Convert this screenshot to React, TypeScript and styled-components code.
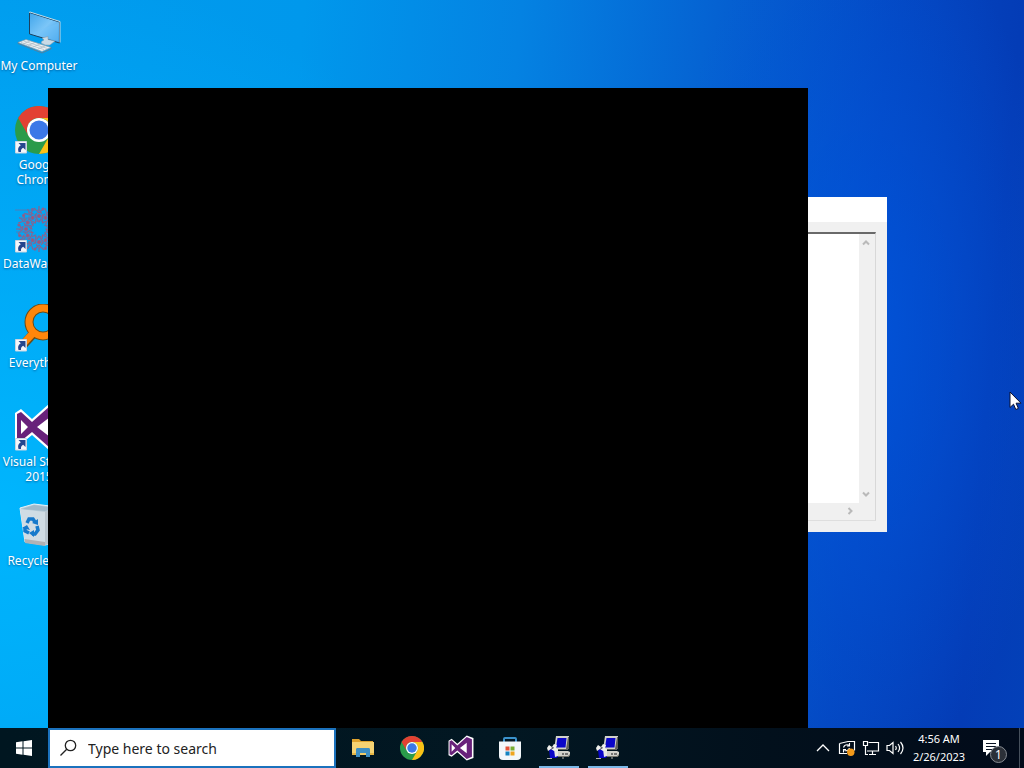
import React from "react";
import styled, { createGlobalStyle, css } from "styled-components";

const Global = createGlobalStyle`
  * { box-sizing: border-box; }
  html, body { margin: 0; padding: 0; }
  body { font-family: "Noto Sans", "Open Sans", sans-serif; overflow: hidden; }
  button { font: inherit; color: inherit; background: none; border: 0; padding: 0; }
  svg { display: block; flex: none; }
`;

const Screen = styled.div`
  display: grid;
  grid-template-rows: 1fr 40px;
  height: 100vh;
  overflow: hidden;
`;

const Desktop = styled.main`
  position: relative;
  min-height: 0;
  overflow: hidden;
  background:
    radial-gradient(ellipse 20% 60% at 84% 46%, rgba(0, 88, 226, 0.7), rgba(0, 88, 226, 0) 100%),
    radial-gradient(ellipse 55% 75% at 0% 70%, rgba(0, 184, 255, 0.9), rgba(0, 184, 255, 0) 100%),
    linear-gradient(95deg, #009cee 0%, #0098ec 28%, #0482e2 48%, #0562d2 66%, #0448c2 82%, #043cb6 94%, #0340b8 100%);
`;

const IconColumn = styled.nav`
  display: flex;
  flex-direction: column;
  width: 78px;
`;

const Shortcut = styled.button`
  display: flex;
  flex-direction: column;
  align-items: center;
  height: 99px;
  padding-top: 7px;
`;

const ShortcutLabel = styled.span`
  margin-top: 3px;
  width: 78px;
  font-size: 12px;
  line-height: 15px;
  text-align: center;
  color: #fff;
  text-shadow: 0 1px 2px rgba(0, 30, 80, 0.5);
`;

const ConsoleWindow = styled.section`
  position: absolute;
  top: 88px;
  right: 216px;
  bottom: 0;
  left: 48px;
  background: #000;
`;

const DialogWindow = styled.section`
  position: absolute;
  top: 197px;
  right: 137px;
  display: flex;
  flex-direction: column;
  width: 480px;
  height: 335px;
  background: #f0f0f0;
`;

const DialogTitle = styled.header`
  height: 25px;
  background: #fff;
`;

const TextFrame = styled.div`
  flex: 1;
  display: grid;
  grid-template-columns: 1fr 16px;
  grid-template-rows: 1fr 17px;
  margin: 10px 11px 11px;
  border-top: 2px solid #696969;
  border-right: 1px solid #d8d8d8;
  border-bottom: 1px solid #dedede;
  background: #f0f0f0;
`;

const LogText = styled.textarea`
  width: 100%;
  height: 100%;
  border: 0;
  outline: 0;
  padding: 0;
  resize: none;
  overflow: hidden;
  background: #fff;
`;

const ScrollTrack = styled.div<{ $horizontal?: boolean }>`
  display: flex;
  flex-direction: ${(p) => (p.$horizontal ? "row" : "column")};
  justify-content: space-between;
  align-items: center;
  padding: ${(p) => (p.$horizontal ? "0 5px 2px" : "5px 2px 5px 0")};
`;

const Taskbar = styled.footer`
  display: flex;
  color: #fff;
  background: linear-gradient(90deg, #001620 0%, #021722 50%, #02101c 75%, #020b1a 100%);
`;

const StartButton = styled.button`
  display: flex;
  align-items: center;
  justify-content: center;
  width: 48px;
`;

const SearchBox = styled.label`
  display: flex;
  align-items: center;
  gap: 10px;
  width: 288px;
  padding: 0 10px;
  border: 2px solid #1b72bd;
  background: #fff;
`;

const SearchInput = styled.input`
  flex: 1;
  min-width: 0;
  border: 0;
  outline: 0;
  padding: 2px 0 0;
  background: none;
  font-family: "Noto Sans", "Open Sans", sans-serif;
  font-size: 14px;
  line-height: 20px;
  color: #222;
  &::placeholder { color: #222; opacity: 1; }
`;

const Apps = styled.nav`
  display: flex;
  gap: 1px;
  padding-left: 3px;
`;

const AppButton = styled.button<{ $running?: boolean }>`
  display: flex;
  align-items: center;
  justify-content: center;
  width: 48px;
  ${(p) =>
    p.$running &&
    css`
      background: linear-gradient(#7cb8e8, #7cb8e8) center bottom / 40px 2px no-repeat;
    `}
`;

const Tray = styled.div`
  display: flex;
  align-items: center;
  margin-left: auto;
`;

const TrayButton = styled.button`
  display: flex;
  align-items: center;
  justify-content: center;
  width: 24px;
  height: 40px;
`;

const Clock = styled.button`
  width: 62px;
  padding-left: 2px;
  font-size: 11px;
  line-height: 18px;
  text-align: center;
  white-space: nowrap;
`;

const NoticeButton = styled.button`
  position: relative;
  display: flex;
  align-items: center;
  justify-content: center;
  width: 44px;
  height: 40px;
`;

const NoticeCount = styled.span`
  position: absolute;
  left: 21px;
  top: 18px;
  width: 17px;
  height: 17px;
  border: 1px solid #868b92;
  border-radius: 50%;
  background: #2b3038;
  font-size: 12px;
  line-height: 15px;
  text-align: center;
`;

const ShowDesktop = styled.button`
  width: 5px;
  height: 40px;
  margin-left: 6px;
  border-left: 1px solid #46505c;
`;

const Pointer = styled.div`
  position: absolute;
  top: 391px;
  right: 2px;
`;

const LinkArrow = () => (
  <g>
    <path d="M.5 35.500h11v11.500H.500z" fill="#f4f6fa" stroke="#c9d4e0" strokeWidth="1" />
    <path d="M3.500 37h7v7l-2.300-2.300Q5.500 43 6 46H3.500Q2 41.500 5.800 39.300z" fill="#25468e" />
  </g>
);

const ComputerIcon = () => (
  <svg width="48" height="48" viewBox="0 0 48 48">
    <defs>
      <linearGradient id="monitor" x1="0" y1="0" x2="1" y2="1">
        <stop offset="0" stopColor="#3fa5ea" />
        <stop offset=".5" stopColor="#7cc6f8" />
        <stop offset="1" stopColor="#2a95e4" />
      </linearGradient>
    </defs>
    <g transform="translate(0 1)">
      <path d="M14.500 4.500 44.500 14V35L14.500 26z" fill="url(#monitor)" stroke="#1c415f" strokeWidth="1" />
      <path d="M14 4.500 15 4 45 13.500V34.500" fill="none" stroke="#c3dce8" strokeWidth="1" />
      <path d="M16 25 43.500 15V33.500L16 25.500z" fill="#74c3fa" opacity=".5" />
      <path d="M27 30l6-1.500v3l7 1.500-5 4q-5 1-9-2 0-2 3-3z" fill="#c9dbe7" stroke="#8395a4" strokeWidth=".5" />
      <path d="M3 34.500 11 31.500 36 39.500 27 43.500z" fill="#edf2f5" stroke="#8f9fab" strokeWidth=".7" />
      <path d="M6 34.500l23 7M8.500 33l24 7.500M8 36l7-3M13 37.500l7-3M18 39l7-3M23 41l7-3" stroke="#aab8c2" strokeWidth=".7" />
      <path d="M3 34.500v1l24 9.500 9-4v-1.500" fill="none" stroke="#66798a" strokeWidth=".8" />
    </g>
  </svg>
);

const ChromeArt = () => (
  <g>
    <circle cx="24" cy="24" r="24" fill="#2a9b4a" />
    <path d="M3.200 12A24 24 0 0 1 44.800 12H24A12 12 0 0 0 13.600 30z" fill="#e34133" />
    <path d="M44.800 12A24 24 0 0 1 24 48L34.400 30A12 12 0 0 0 24 12z" fill="#fbc116" />
    <circle cx="24" cy="24" r="12" fill="#fff" />
    <circle cx="24" cy="24" r="9.500" fill="#3b78e7" />
  </g>
);

const ChromeDesktopIcon = () => (
  <svg width="48" height="48" viewBox="0 0 48 48"><ChromeArt /><LinkArrow /></svg>
);

const ChromeTaskIcon = () => (
  <svg width="24" height="24" viewBox="0 0 48 48"><ChromeArt /></svg>
);

const DataWagonIcon = () => (
  <svg width="48" height="48" viewBox="0 0 48 48">
    <g fill="none" stroke="#a4567c" strokeWidth="1.200" opacity=".85">
      {[0, 30, 60, 90, 120, 150, 180, 210, 240, 270, 300, 330].map((a) => (
        <g key={a} transform={`rotate(${a} 24 24)`}>
          <path d="M24 17 28 11 24 4 20 11zM19 3l5 5 5-5M24 1v4" strokeDasharray="4 1" />
          <circle cx="24" cy="11" r="1.500" fill="#c14561" />
          <circle cx="28" cy="4" r="1" fill="#b44868" />
        </g>
      ))}
      <circle cx="24" cy="24" r="8" strokeDasharray="3 2" />
    </g>
    <path d="M0 5h20M4 13h12M1 27h10" stroke="#4f7cb8" strokeWidth="1" />
    <LinkArrow />
  </svg>
);

const EverythingIcon = () => (
  <svg width="48" height="48" viewBox="0 0 48 48">
    <path d="M19 29 8 41" stroke="#6b4c18" strokeWidth="9" />
    <circle cx="28" cy="18" r="14" fill="none" stroke="#6b4c18" strokeWidth="9" />
    <path d="M20 27 7 41" stroke="#ff860a" strokeWidth="7" />
    <circle cx="28" cy="18" r="14" fill="none" stroke="#ff860a" strokeWidth="7" />
    <LinkArrow />
  </svg>
);

const StudioArt = () => (
  <g>
    <path d="M0 10 6 6 17 16 35 0 48 5V43L35 48 17 32 6 41 0 38z" fill="#fff" />
    <path fillRule="evenodd" d="M2 11 6 9 17 19 35 3 45 7V41L35 45 17 29 6 38 2 36zM6 17V31L13 24zM22 24 35 34V14z" fill="#68217a" />
  </g>
);

const StudioDesktopIcon = () => (
  <svg width="48" height="48" viewBox="0 0 48 48"><StudioArt /><LinkArrow /></svg>
);

const StudioTaskIcon = () => (
  <svg width="26" height="26" viewBox="-1 -1 50 50"><StudioArt /></svg>
);

const RecycleIcon = () => (
  <svg width="48" height="48" viewBox="0 0 48 48">
    <path d="M5 6 19 2 43 5 39 41 30 43 10 40z" fill="#b7cad7" stroke="#e4f1f7" strokeWidth="1" />
    <path d="M5 7 30 10 30 43 10 40z" fill="#d0dce4" />
    <path d="M30 10 43 5 39 41 30 43z" fill="#b9c5ce" />
    <path d="M7 7 19 3 40 6 30 9z" fill="#9fb9c9" />
    <path d="M9.500 37l20.500 3v4L10 41z" fill="#b1b2b5" />
    <g fill="none" stroke="#1679cb" strokeWidth="3.500">
      <path d="M12 21l2-4h4l2 3" />
      <path d="M22 24l1 4-3 4h-3" />
      <path d="M14 31l-4-2v-4" />
    </g>
    <path d="M17 21l6 2V17zM19 28v7l-5-4zM7 26l5-3 3 5z" fill="#1679cb" />
  </svg>
);

const WindowsLogo = () => (
  <svg width="16" height="16" viewBox="0 0 16 16">
    <path d="M0 2.200 6.500 1.300V7.500H0zM7.500 1.200 16 0V7.500H7.500zM0 8.500H6.500V14.700L0 13.800zM7.500 8.500H16V16L7.500 14.800z" fill="#fff" />
  </svg>
);

const SearchIcon = () => (
  <svg width="18" height="18" viewBox="0 0 18 18" fill="none" stroke="#222" strokeWidth="1.300">
    <circle cx="10.500" cy="6.500" r="5.200" />
    <path d="M6.700 10.300.500 16.500" />
  </svg>
);

const FolderIcon = () => (
  <svg width="24" height="24" viewBox="0 0 24 24">
    <path d="M1 3h7l2 2h12v3H1z" fill="#dfa32e" />
    <path d="M1 6h22v13H1z" fill="#f6d373" />
    <path d="M1 17h22v2H1z" fill="#e6b645" />
    <path d="M5 13.500q0-1.500 1-1.500h12q1 0 1 1.500V21h-4v-4H9v4H5z" fill="#3e8fc4" />
    <path d="M9 17h6v2H9z" fill="#f0cc69" />
  </svg>
);

const StoreIcon = () => (
  <svg width="24" height="24" viewBox="0 0 24 24">
    <path d="M6 6V3q0-1 1-1h10q1 0 1 1v3" fill="none" stroke="#3b92cc" strokeWidth="2" />
    <path d="M1 5.500h22V20q0 4-4 4H5q-4 0-4-4z" fill="#f3f7fa" />
    <path d="M7.500 10.500h4v4h-4z" fill="#e35239" />
    <path d="M12.500 10.500h4v4h-4z" fill="#78ad31" />
    <path d="M7.500 15.500h4v4h-4z" fill="#1583c1" />
    <path d="M12.500 15.500h4v4h-4z" fill="#efa51f" />
  </svg>
);

const SetupIcon = () => (
  <svg width="24" height="24" viewBox="0 0 24 24">
    <path d="M9 0h13v12l-2 2H7z" fill="#d2d2cc" />
    <path d="M21 1h1v11l-2 2H9v-1h10z" fill="#5f5f5a" />
    <path d="M10.500 2h9l-1 9.500H9z" fill="#0b06c8" />
    <path d="M9 15h12l2 1v3l-2 2H9z" fill="#d2d2cc" />
    <path d="M10 20h11l2-2v1.500L21.500 21H10z" fill="#77776f" />
    <path d="M15 17.500h2v1h-2zM18 17.500h3v1h-3z" fill="#17171a" />
    <path d="M2 13.500h9V21l-2 1H3z" fill="#0b06c8" />
    <path d="M7 13h4v7l-3 1z" fill="#e9e9e4" />
    <path d="M0 12 2 9l3 2 2-3 3 1-1 3 2 2-4 1-3-2-3 2z" fill="#f0f0ec" />
    <path d="M4 12l2-1 1 1-2 1z" fill="#3a3a48" />
    <path d="M0 22h5v1H0zM15 21.500h2v1h-2z" fill="#b5b5ae" />
  </svg>
);

const ScrollChevron = ({ turn }: { turn: number }) => (
  <svg width="8" height="8" viewBox="0 0 8 8">
    <path d="M1 5.500 4 2.500 7 5.500" transform={`rotate(${turn} 4 4)`} fill="none" stroke="#b9b9b9" strokeWidth="2" />
  </svg>
);

const TrayChevron = () => (
  <svg width="14" height="8" viewBox="0 0 14 8"><path d="M1 7 7 1l6 6" fill="none" stroke="#fff" strokeWidth="1.300" /></svg>
);

const UpdateIcon = () => (
  <svg width="18" height="18" viewBox="0 0 18 18">
    <path d="M1.500 4.500 10 2.500h6.500v9M1.500 4.500v10H9" fill="none" stroke="#fff" strokeWidth="1.200" />
    <path d="M5.500 8.500Q6.500 5 11 6M11.500 4v3H9M11.500 9q-1 3.500-5 2.500M5.500 13.500v-3H8" fill="none" stroke="#fff" strokeWidth="1.100" />
    <circle cx="12.800" cy="13.200" r="3.700" fill="#f39a1a" />
  </svg>
);

const NetworkIcon = () => (
  <svg width="18" height="18" viewBox="0 0 18 18" fill="none" stroke="#fff" strokeWidth="1.200">
    <path d="M6.500 3.500h10v8.500H5M10.500 12v3.500M7 15.500h7" />
    <path d="M1.500 2.500h4v4h-4zM3.500 7v8.500H6" />
  </svg>
);

const VolumeIcon = () => (
  <svg width="18" height="18" viewBox="0 0 18 18" fill="none" stroke="#fff" strokeWidth="1.200">
    <path d="M1 6.500h2.500L7 3.500v11l-3.500-3H1z" />
    <path d="M9.500 7q1.500 2 0 4M12 5q3.200 4 0 8M14.500 3q5 6 0 12" />
  </svg>
);

const NoticeIcon = () => (
  <svg width="16" height="16" viewBox="0 0 16 16">
    <path d="M0 0h16v12H7l-4 4v-4H0z" fill="#fff" />
    <path d="M3 3.500h10M3 6.500h10M3 9.500h7" stroke="#0a1424" strokeWidth="1" />
  </svg>
);

const MousePointer = () => (
  <svg width="13" height="20" viewBox="0 0 13 20">
    <path d="M1 1v15.500l3.500-3.300 2.300 5.300 2.600-1.100-2.300-5.200H12z" fill="#fff" stroke="#0a1030" strokeWidth="1" />
  </svg>
);

const shortcuts = [
  { label: "My Computer", Icon: ComputerIcon },
  { label: "Google Chrome", Icon: ChromeDesktopIcon },
  { label: "DataWagons", Icon: DataWagonIcon },
  { label: "Everything", Icon: EverythingIcon },
  { label: "Visual Studio 2015", Icon: StudioDesktopIcon },
  { label: "Recycle Bin", Icon: RecycleIcon },
];

const apps = [
  { name: "File Explorer", Icon: FolderIcon },
  { name: "Google Chrome", Icon: ChromeTaskIcon },
  { name: "Visual Studio", Icon: StudioTaskIcon },
  { name: "Microsoft Store", Icon: StoreIcon },
  { name: "Setup", Icon: SetupIcon, running: true },
  { name: "Setup log", Icon: SetupIcon, running: true },
];

export default function App() {
  return (
    <Screen>
      <Global />
      <Desktop>
        <IconColumn aria-label="Desktop">
          {shortcuts.map(({ label, Icon }) => (
            <Shortcut key={label}>
              <Icon />
              <ShortcutLabel>{label}</ShortcutLabel>
            </Shortcut>
          ))}
        </IconColumn>
        <DialogWindow aria-label="Setup log">
          <DialogTitle />
          <TextFrame>
            <LogText readOnly aria-label="Log" />
            <ScrollTrack>
              <ScrollChevron turn={0} />
              <ScrollChevron turn={180} />
            </ScrollTrack>
            <ScrollTrack $horizontal>
              <ScrollChevron turn={270} />
              <ScrollChevron turn={90} />
            </ScrollTrack>
          </TextFrame>
        </DialogWindow>
        <ConsoleWindow aria-label="Console" />
        <Pointer>
          <MousePointer />
        </Pointer>
      </Desktop>
      <Taskbar>
        <StartButton aria-label="Start"><WindowsLogo /></StartButton>
        <SearchBox>
          <SearchIcon />
          <SearchInput type="text" aria-label="Search" placeholder="Type here to search" />
        </SearchBox>
        <Apps aria-label="Applications">
          {apps.map(({ name, Icon, running }) => (
            <AppButton key={name} aria-label={name} $running={running}>
              <Icon />
            </AppButton>
          ))}
        </Apps>
        <Tray>
          <TrayButton aria-label="Show hidden icons"><TrayChevron /></TrayButton>
          <TrayButton aria-label="Updates"><UpdateIcon /></TrayButton>
          <TrayButton aria-label="Network"><NetworkIcon /></TrayButton>
          <TrayButton aria-label="Volume"><VolumeIcon /></TrayButton>
          <Clock>4:56 AM<br />2/26/2023</Clock>
          <NoticeButton aria-label="Notifications">
            <NoticeIcon />
            <NoticeCount>1</NoticeCount>
          </NoticeButton>
          <ShowDesktop aria-label="Show desktop" />
        </Tray>
      </Taskbar>
    </Screen>
  );
}
